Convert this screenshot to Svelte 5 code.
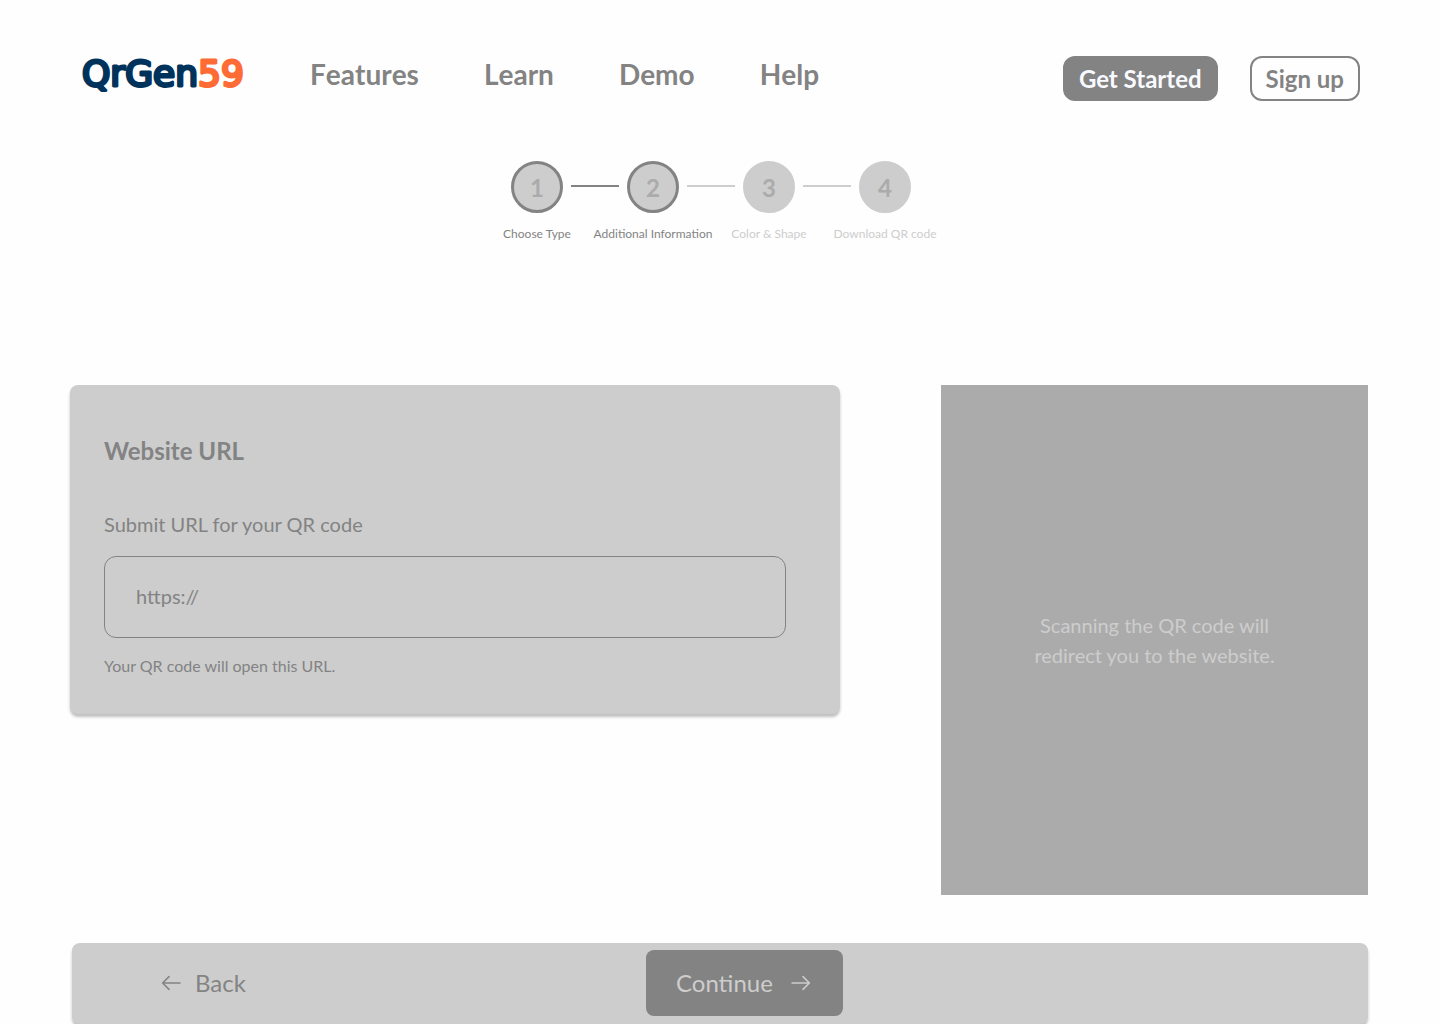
<script>
  const links = ['Features', 'Learn', 'Demo', 'Help'];
  const steps = ['Choose Type', 'Additional Information', 'Color & Shape', 'Download QR code'];
  const current = 2;
  let url = $state('');
</script>

<div class="page">
  <header>
    <a class="logo" href="#home" aria-label="QrGen59">
      <svg width="165" height="40" viewBox="0 0 165 40">
        <text x="2" y="30"><tspan class="navy">QrGen</tspan><tspan class="orange">59</tspan></text>
      </svg>
    </a>
    <nav>
      {#each links as link}
        <a href="#{link.toLowerCase()}">{link}</a>
      {/each}
    </nav>
    <div class="actions">
      <button class="solid" type="button">Get Started</button>
      <button class="outline" type="button">Sign up</button>
    </div>
  </header>

  <ol class="steps">
    {#each steps as step, i}
      {#if i > 0}
        <li class="line" class:done={i < current} aria-hidden="true"></li>
      {/if}
      <li class="step" class:done={i < current}>
        <span class="circle">{i + 1}</span>
        <span class="caption">{step}</span>
      </li>
    {/each}
  </ol>

  <main>
    <section class="card">
      <h1>Website URL</h1>
      <label for="url">Submit URL for your QR code</label>
      <input id="url" type="text" placeholder="https://" bind:value={url} />
      <p>Your QR code will open this URL.</p>
    </section>
    <aside>
      <p>Scanning the QR code will<br />redirect you to the website.</p>
    </aside>
  </main>

  <footer>
    <button class="back" type="button">
      <svg width="24" height="24" viewBox="0 0 24 24"><path d="M21 12H3.800M10 5.600 3.600 12l6.400 6.400" /></svg>
      Back
    </button>
    <button class="continue" type="button">
      Continue
      <svg width="24" height="24" viewBox="0 0 24 24"><path d="M3 12h17.200M14 5.600 20.400 12 14 18.400" /></svg>
    </button>
  </footer>
</div>

<style>
  :global(body) {
    margin: 0;
    background: #fefefe;
  }
  .page {
    font-family: Lato, sans-serif;
    color: #838383;
    box-sizing: border-box;
    padding-top: 56px;
  }
  a {
    color: inherit;
    text-decoration: none;
  }
  button {
    font: inherit;
    color: inherit;
    border: 0;
    background: none;
    cursor: pointer;
  }
  header {
    display: flex;
    align-items: flex-start;
    padding: 0 80px;
  }
  .logo svg {
    display: block;
    overflow: visible;
  }
  .logo text {
    font-family: "DejaVu Sans", sans-serif;
    font-size: 36px;
    stroke-width: 3px;
    stroke-linejoin: round;
  }
  .navy {
    fill: #00335b;
    stroke: #00335b;
  }
  .orange {
    fill: #ff6b35;
    stroke: #ff6b35;
  }
  nav {
    display: flex;
    gap: 65px;
    margin-left: 65px;
    font-size: 28px;
    font-weight: 700;
    line-height: 36px;
    font-kerning: none;
  }
  .actions {
    display: flex;
    gap: 32px;
    margin-left: auto;
    font-size: 24px;
    font-weight: 700;
    line-height: 29px;
  }
  .actions button {
    border: 2px solid #838383;
    border-radius: 12px;
    padding: 6px 14px;
    white-space: nowrap;
  }
  .actions .solid {
    background: #838383;
    color: #f9faff;
  }
  .steps {
    display: flex;
    justify-content: center;
    gap: 8px;
    list-style: none;
    margin: 60px 0 0;
    padding: 0 18px 0 0;
  }
  .step {
    display: flex;
    flex-direction: column;
    align-items: center;
    width: 52px;
    color: #cdcdcd;
  }
  .step.done {
    color: #838383;
  }
  .circle {
    box-sizing: border-box;
    width: 52px;
    height: 52px;
    border: 3px solid #cdcdcd;
    border-radius: 50%;
    background: #cdcdcd;
    color: #ababab;
    font-size: 24px;
    font-weight: 700;
    line-height: 48px;
    text-align: center;
  }
  .done .circle {
    border-color: #838383;
  }
  .caption {
    margin-top: 13px;
    font-size: 12px;
    line-height: 16px;
    white-space: nowrap;
  }
  .line {
    width: 48px;
    height: 2px;
    margin-top: 24px;
    background: #cdcdcd;
  }
  .line.done {
    background: #838383;
  }
  main {
    display: grid;
    grid-template-columns: 770fr 427fr;
    gap: 101px;
    align-items: start;
    margin-top: 143px;
    padding: 0 72px 0 70px;
  }
  .card {
    display: flex;
    flex-direction: column;
    padding: 48px 54px 36px 34px;
    border-radius: 8px;
    background: #cdcdcd;
    box-shadow: 0 3px 3px rgba(0, 0, 0, 0.25);
  }
  h1 {
    margin: 0;
    font-size: 24px;
    font-weight: 700;
    line-height: 36px;
  }
  label {
    margin-top: 39px;
    font-size: 20px;
    line-height: 32px;
  }
  input {
    box-sizing: border-box;
    width: 100%;
    margin-top: 16px;
    padding: 23px 31px 25px;
    border: 1px solid #838383;
    border-radius: 12px;
    background: none;
    color: #838383;
    font: 20px/32px Lato, sans-serif;
    text-rendering: optimizeLegibility;
    font-variant-ligatures: common-ligatures;
  }
  input::placeholder {
    color: #838383;
    opacity: 1;
  }
  .card p {
    margin: 16px 0 0;
    font-size: 16px;
    line-height: 24px;
  }
  aside {
    display: flex;
    align-items: center;
    justify-content: center;
    min-height: 510px;
    background: #ababab;
    color: #cdcdcd;
    font-size: 20px;
    line-height: 30px;
    text-align: center;
  }
  aside p {
    margin: 0;
  }
  footer {
    display: grid;
    grid-template-columns: 574fr 722fr;
    align-items: center;
    justify-items: start;
    margin: 48px 72px 0;
    padding: 7px 0 8px;
    border-radius: 8px;
    background: #cdcdcd;
    box-shadow: 0 3px 3px rgba(0, 0, 0, 0.25);
    font-size: 24px;
    line-height: 36px;
  }
  footer button {
    display: flex;
    align-items: center;
  }
  .back {
    gap: 12px;
    padding: 15px 16px;
    margin-left: 71px;
  }
  .continue {
    gap: 16px;
    padding: 15px 30px;
    border-radius: 8px;
    background: #838383;
    color: #cdcdcd;
  }
  footer path {
    fill: none;
    stroke: currentColor;
    stroke-width: 1.5;
    stroke-linecap: round;
    stroke-linejoin: round;
  }
</style>
